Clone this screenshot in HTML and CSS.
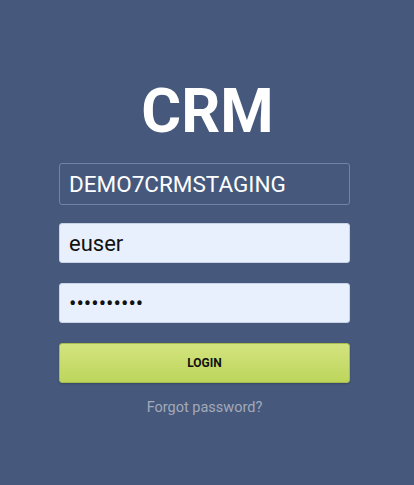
FILE: index.html
```html
<!DOCTYPE html>
<html lang="en">
<head>
  <meta charset="UTF-8">
  <meta name="viewport" content="width=device-width, initial-scale=1.0">
  <title>CRM Login</title>
  <link rel="stylesheet" href="styles.css">
</head>
<body>
  <div class="login">
    <h1 class="logo">CRM</h1>
    <form class="loginForm">
      <input type="text" class="field company" value="DEMO7CRMSTAGING">
      <input type="text" class="field" value="euser">
      <input type="password" class="field" value="1234567890">
      <button type="button" class="loginBtn">LOGIN</button>
      <a href="#" class="forgot">Forgot password?</a>
    </form>
  </div>
</body>
</html>
```

FILE: styles.css
```css
/* Page */
body {
  margin: 0;
  padding: 0;
  background: #46597d;
  font-family: Roboto, 'Liberation Sans', sans-serif;
  min-height: 100vh;
}

.login {
  width: 291px;
  margin: 0 auto;
  padding-top: 79px;
  padding-right: 5px;
}

.logo {
  margin: 0 0 20px;
  padding-left: 6px;
  font-size: 61px;
  font-weight: 700;
  line-height: 64px;
  color: #fff;
  text-align: center;
}

.loginForm {
  display: flex;
  flex-direction: column;
}

.field {
  height: 40px;
  margin: 0 0 20px;
  padding: 0 9px;
  font-family: inherit;
  font-size: 22px;
  color: #111;
  background: #e8f0fe;
  border: 1px solid #c8d3e6;
  border-radius: 3px;
  box-sizing: border-box;
  outline: none;
}

.field.company {
  height: 42px;
  margin-bottom: 18px;
  font-size: 22.5px;
  color: #fff;
  background: transparent;
  border: 1px solid #7283a3;
}

.loginBtn {
  height: 40px;
  margin-top: 0;
  font-family: inherit;
  font-size: 12px;
  font-weight: 700;
  color: #111;
  background: linear-gradient(#d3e47f, #bdd55c);
  border: 1px solid #a8bd4c;
  border-radius: 3px;
  box-shadow: 0 1px 2px rgba(0, 0, 0, 0.2);
}

.forgot {
  margin-top: 16px;
  font-size: 14.5px;
  color: #a3aab8;
  text-align: center;
  text-decoration: none;
}
```
